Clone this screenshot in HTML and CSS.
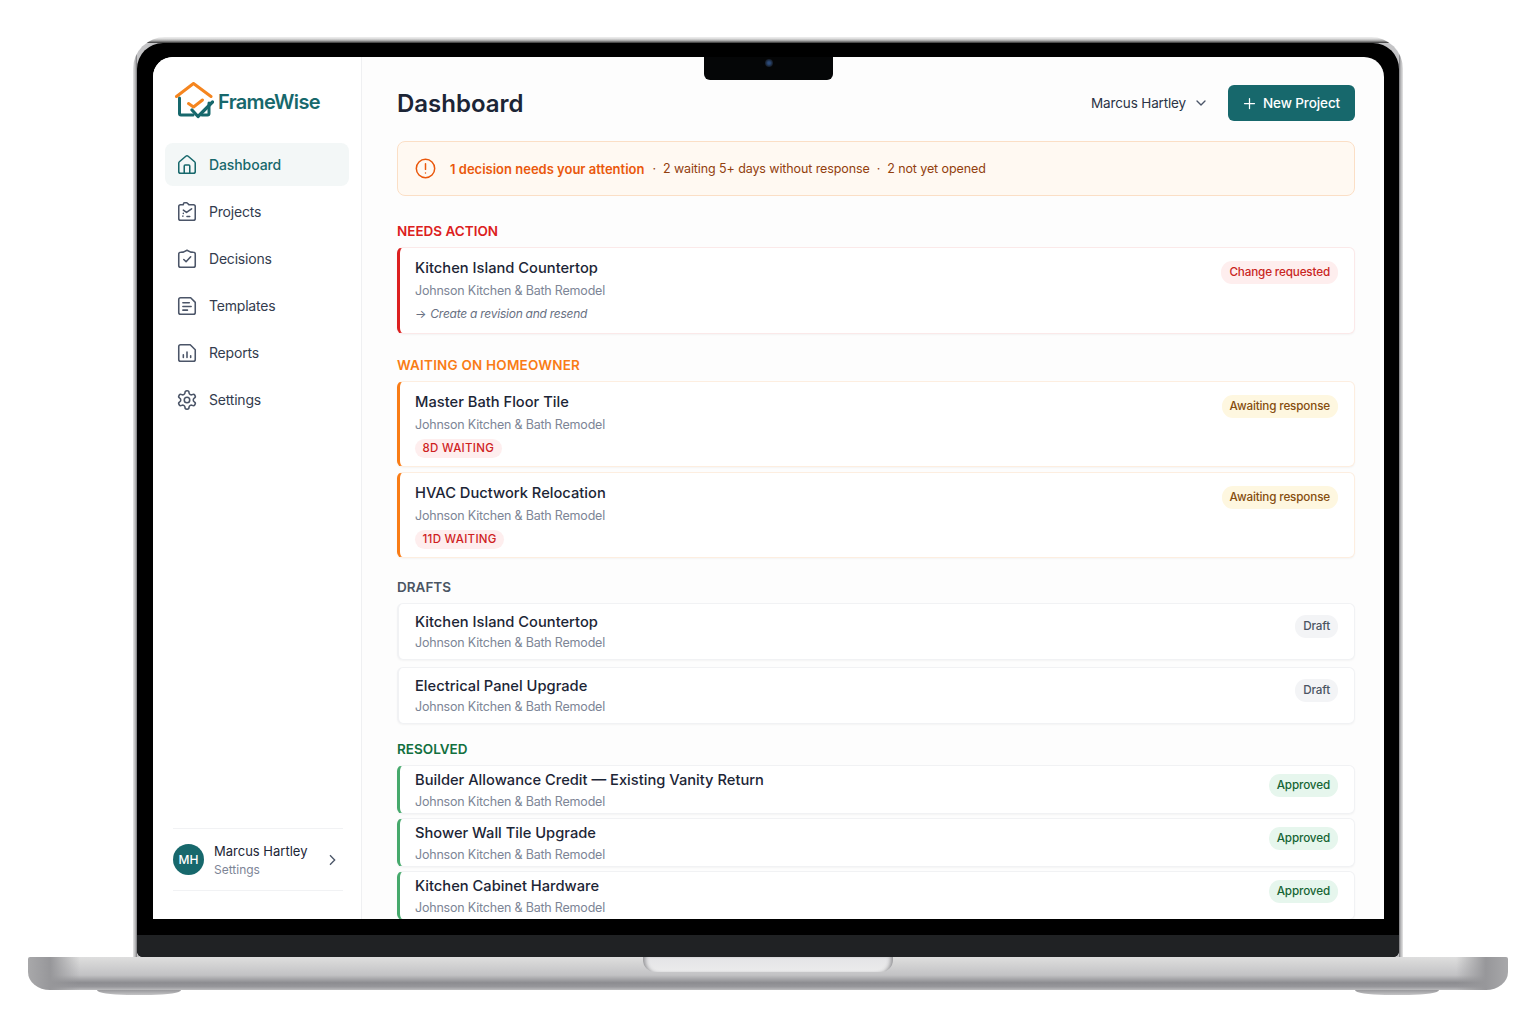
FILE: index.html
```html
<!DOCTYPE html>
<html lang="en">
<head>
    <meta charset="UTF-8">
    <meta name="viewport" content="width=device-width, initial-scale=1.0">
    <title>FrameWise - Dashboard</title>
    <link rel="stylesheet" href="styles.css">
</head>
<body>
    <div class="laptop">
        <div class="lid">
            <div class="bezel">
                <div class="notch"><span class="camera"></span></div>
                <div class="screen">
                    <aside class="sidebar">
                        <a href="#" class="logo">
                            <svg class="logo-mark" viewBox="0 0 40 38" fill="none" stroke-linecap="round" stroke-linejoin="round">
                                <path d="M2.5 14.5 19.5 1.5l17.5 13" stroke="#f5851f" stroke-width="3"/>
                                <path d="M5.5 16v15.5a1.500 1.500 0 0 0 1.500 1.500h12M35 21v10.500a1.500 1.500 0 0 1-1.500 1.500H28" stroke="#17686c" stroke-width="3"/>
                                <path d="m14.500 21.500 5 3.500 9-7" stroke="#f5851f" stroke-width="3"/>
                                <path d="m18 28 6 6.500L38.500 20" stroke="#17686c" stroke-width="3.200"/>
                            </svg>
                            <span>FrameWise</span>
                        </a>
                        <ul class="nav-links">
                            <li><a href="#" class="active">
                                <svg class="nav-icon" viewBox="0 0 24 24"><path d="M15 21v-8a1 1 0 0 0-1-1h-4a1 1 0 0 0-1 1v8"/><path d="M3 10a2 2 0 0 1 .709-1.528l7-5.999a2 2 0 0 1 2.582 0l7 5.999A2 2 0 0 1 21 10v9a2 2 0 0 1-2 2H5a2 2 0 0 1-2-2z"/></svg>
                                Dashboard</a></li>
                            <li><a href="#">
                                <svg class="nav-icon" viewBox="0 0 24 24"><path d="M8 4H5a2 2 0 0 0-2 2v13a2 2 0 0 0 2 2h14a2 2 0 0 0 2-2V6a2 2 0 0 0-2-2h-5l-1.500-1.500a1.500 1.500 0 0 0-1-.5H9.500A1.500 1.500 0 0 0 8 3.500z"/><path d="m8 10 3.500 2.500L17 8.500"/><path d="M7.500 16.500h.01M8 13.500h.01M12 17h3"/></svg>
                                Projects</a></li>
                            <li><a href="#">
                                <svg class="nav-icon" viewBox="0 0 24 24"><path d="M8 4.500 5 4.600a2 2 0 0 0-2 2V19a2 2 0 0 0 2 2h14a2 2 0 0 0 2-2V6.600a2 2 0 0 0-2-2L16 4.500 12 2.500z"/><path d="m8.500 12.500 2.500 2.500 5-5.500"/></svg>
                                Decisions</a></li>
                            <li><a href="#">
                                <svg class="nav-icon" viewBox="0 0 24 24"><path d="M5 3h11l5 5v11a2 2 0 0 1-2 2H5a2 2 0 0 1-2-2V5a2 2 0 0 1 2-2z"/><path d="M7.500 8.500h7M7.500 12.500h9M7.500 16.500h5"/></svg>
                                Templates</a></li>
                            <li><a href="#">
                                <svg class="nav-icon" viewBox="0 0 24 24"><path d="M5 3h10.500L21 8.500V19a2 2 0 0 1-2 2H5a2 2 0 0 1-2-2V5a2 2 0 0 1 2-2z"/><path d="M8 17v-3M12 17v-6M16 17v-2"/></svg>
                                Reports</a></li>
                            <li><a href="#">
                                <svg class="nav-icon" viewBox="0 0 24 24"><path d="M12.220 2h-.44a2 2 0 0 0-2 2v.18a2 2 0 0 1-1 1.730l-.43.25a2 2 0 0 1-2 0l-.15-.08a2 2 0 0 0-2.730.73l-.22.38a2 2 0 0 0 .73 2.730l.15.1a2 2 0 0 1 1 1.720v.51a2 2 0 0 1-1 1.740l-.15.09a2 2 0 0 0-.73 2.730l.22.38a2 2 0 0 0 2.730.73l.15-.08a2 2 0 0 1 2 0l.43.25a2 2 0 0 1 1 1.730V20a2 2 0 0 0 2 2h.44a2 2 0 0 0 2-2v-.18a2 2 0 0 1 1-1.730l.43-.25a2 2 0 0 1 2 0l.15.08a2 2 0 0 0 2.730-.73l.22-.39a2 2 0 0 0-.73-2.730l-.15-.08a2 2 0 0 1-1-1.740v-.5a2 2 0 0 1 1-1.740l.15-.09a2 2 0 0 0 .73-2.730l-.22-.38a2 2 0 0 0-2.730-.73l-.15.08a2 2 0 0 1-2 0l-.43-.25a2 2 0 0 1-1-1.730V4a2 2 0 0 0-2-2z"/><circle cx="12" cy="12" r="3"/></svg>
                                Settings</a></li>
                        </ul>
                        <div class="user-card">
                            <div class="avatar">MH</div>
                            <div class="user-text">
                                <div class="user-name">Marcus Hartley</div>
                                <div class="user-sub">Settings</div>
                            </div>
                            <svg class="user-arrow" viewBox="0 0 24 24"><path d="m9 5 7 7-7 7"/></svg>
                        </div>
                    </aside>

                    <main class="content">
                        <header class="topbar">
                            <h1>Dashboard</h1>
                            <div class="user-menu">
                                <span>Marcus Hartley</span>
                                <svg viewBox="0 0 24 24"><path d="m6 9 6 6 6-6"/></svg>
                            </div>
                            <button class="new-btn">
                                <svg viewBox="0 0 24 24"><path d="M12 4v16M4 12h16"/></svg>
                                New Project
                            </button>
                        </header>

                        <div class="alert">
                            <svg class="alert-icon" viewBox="0 0 24 24"><circle cx="12" cy="12" r="10.500"/><path d="M12 6.500v6.500M12 17v.01"/></svg>
                            <strong>1 decision needs your attention</strong>
                            <span class="dot">·</span>
                            <span>2 waiting 5+ days without response</span>
                            <span class="dot">·</span>
                            <span>2 not yet opened</span>
                        </div>

                        <h2 class="section-title red">NEEDS ACTION</h2>
                        <div class="card-list">
                            <div class="card card-red">
                                <div class="card-body">
                                    <h3>Kitchen Island Countertop</h3>
                                    <p class="sub">Johnson Kitchen &amp; Bath Remodel</p>
                                    <p class="note">→ <em>Create a revision and resend</em></p>
                                </div>
                                <span class="badge badge-red">Change requested</span>
                            </div>
                        </div>

                        <h2 class="section-title orange">WAITING ON HOMEOWNER</h2>
                        <div class="card-list">
                            <div class="card card-orange">
                                <div class="card-body">
                                    <h3>Master Bath Floor Tile</h3>
                                    <p class="sub">Johnson Kitchen &amp; Bath Remodel</p>
                                    <span class="tag">8D WAITING</span>
                                </div>
                                <span class="badge badge-yellow">Awaiting response</span>
                            </div>
                            <div class="card card-orange">
                                <div class="card-body">
                                    <h3>HVAC Ductwork Relocation</h3>
                                    <p class="sub">Johnson Kitchen &amp; Bath Remodel</p>
                                    <span class="tag">11D WAITING</span>
                                </div>
                                <span class="badge badge-yellow">Awaiting response</span>
                            </div>
                        </div>

                        <h2 class="section-title gray">DRAFTS</h2>
                        <div class="card-list">
                            <div class="card card-plain">
                                <div class="card-body">
                                    <h3>Kitchen Island Countertop</h3>
                                    <p class="sub">Johnson Kitchen &amp; Bath Remodel</p>
                                </div>
                                <span class="badge badge-gray">Draft</span>
                            </div>
                            <div class="card card-plain">
                                <div class="card-body">
                                    <h3>Electrical Panel Upgrade</h3>
                                    <p class="sub">Johnson Kitchen &amp; Bath Remodel</p>
                                </div>
                                <span class="badge badge-gray">Draft</span>
                            </div>
                        </div>

                        <h2 class="section-title green">RESOLVED</h2>
                        <div class="card-list tight">
                            <div class="card card-green">
                                <div class="card-body">
                                    <h3>Builder Allowance Credit — Existing Vanity Return</h3>
                                    <p class="sub">Johnson Kitchen &amp; Bath Remodel</p>
                                </div>
                                <span class="badge badge-green">Approved</span>
                            </div>
                            <div class="card card-green">
                                <div class="card-body">
                                    <h3>Shower Wall Tile Upgrade</h3>
                                    <p class="sub">Johnson Kitchen &amp; Bath Remodel</p>
                                </div>
                                <span class="badge badge-green">Approved</span>
                            </div>
                            <div class="card card-green">
                                <div class="card-body">
                                    <h3>Kitchen Cabinet Hardware</h3>
                                    <p class="sub">Johnson Kitchen &amp; Bath Remodel</p>
                                </div>
                                <span class="badge badge-green">Approved</span>
                            </div>
                        </div>
                    </main>
                </div>
                <div class="chin"></div>
            </div>
        </div>
        <div class="base">
            <span class="base-notch"></span>
            <span class="foot foot-left"></span>
            <span class="foot foot-right"></span>
        </div>
    </div>
</body>
</html>
```

FILE: styles.css
```css
:root {
    --teal: #17686c;
    --ink: #1c2536;
    --muted: #7d8596;
    --red: #dc2020;
    --orange: #f97c16;
    --green: #46a96c;
}

* {
    margin: 0;
    padding: 0;
    box-sizing: border-box;
    font-family: 'Inter', 'Liberation Sans', sans-serif;
}

body {
    background: white;
    height: 1024px;
    overflow: hidden;
}

svg {
    display: block;
    flex: none;
}

/* Laptop shell */
.laptop {
    display: flex;
    flex-direction: column;
    align-items: center;
    padding-top: 37px;
}

.lid {
    width: 1270px;
    height: 920px;
    padding: 6px 4px 0;
    border-radius: 32px 32px 0 0;
    background: linear-gradient(#eeeeee, #dcdcdc 30%, #a8a8a8 60%, #555 90%, #222) top / 100% 6px no-repeat, linear-gradient(90deg, #e6e6e6, #b4b4b6 60%, #77777a) left / 4px 100% no-repeat, linear-gradient(270deg, #e6e6e6, #b4b4b6 60%, #77777a) right / 4px 100% no-repeat, #c4c4c6;
}

.bezel {
    position: relative;
    display: flex;
    flex-direction: column;
    height: 914px;
    padding: 14px 15px 0 16px;
    background: #000;
    border-radius: 26px 26px 6px 6px;
}

.notch {
    position: absolute;
    top: 14px;
    left: 567px;
    display: flex;
    justify-content: center;
    align-items: center;
    width: 129px;
    height: 23px;
    background: #050607;
    border-radius: 0 0 6px 6px;
    z-index: 2;
}

.camera {
    width: 8px;
    height: 8px;
    margin-top: -12px;
    border-radius: 50%;
    background: radial-gradient(circle, #2c4a78 20%, #12161d 75%);
}

.screen {
    display: flex;
    height: 862px;
    overflow: hidden;
    background: #fdfdfd;
    border-radius: 20px 20px 0 0;
}

.chin {
    height: 22px;
    margin: 16px -15px 0 -16px;
    background: #202224;
    border-radius: 0 0 6px 6px;
}

.base {
    position: relative;
    width: 1480px;
    height: 33px;
    border-radius: 2px 2px 22px 22px / 2px 2px 18px 18px;
    background:
        linear-gradient(90deg, #a8a8aa, #97979a 1.500%, rgba(200,200,202,0) 3.500%, rgba(200,200,202,0) 96.500%, #97979a 98.500%, #a8a8aa),
        linear-gradient(#dedede, #cfcfd0 30%, #c2c2c4 55%, #8c8c90 78%, #97979b 90%, #bcbcbe);
}

.base-notch {
    position: absolute;
    top: 0;
    left: 615px;
    width: 250px;
    height: 15px;
    background: linear-gradient(#e4e4e6, #ebebec);
    border-radius: 0 0 12px 12px;
    box-shadow: inset 5px 0 4px -3px #8d8d90, inset -5px 0 4px -3px #8d8d90;
}

.foot {
    position: absolute;
    top: 33px;
    width: 84px;
    height: 5px;
    background: linear-gradient(#98989b, #c4c4c6);
    border-radius: 0 0 30px 30px / 0 0 5px 5px;
}

.foot-left {
    left: 69px;
}

.foot-right {
    right: 69px;
}

/* Sidebar */
.sidebar {
    display: flex;
    flex-direction: column;
    flex: none;
    width: 209px;
    padding: 25px 12px 28px;
    background: white;
    border-right: 1px solid #eff0f2;
}

.logo {
    display: flex;
    align-items: center;
    gap: 4px;
    margin-left: 9px;
    color: var(--teal);
    font-size: 20px;
    font-weight: 600;
    letter-spacing: -0.650px;
    text-decoration: none;
}

.logo span {
    padding-top: 2px;
}

.logo-mark {
    width: 40px;
    height: 38px;
}

.nav-links {
    display: flex;
    flex-direction: column;
    gap: 4px;
    margin-top: 23px;
    list-style: none;
}

.nav-links a {
    display: flex;
    align-items: center;
    gap: 11px;
    height: 43px;
    padding-left: 11px;
    border-radius: 8px;
    color: #333c4e;
    font-size: 14px;
    letter-spacing: -0.200px;
    text-decoration: none;
}

.nav-links a.active {
    background: #f3f7f7;
    color: var(--teal);
    font-weight: 500;
    letter-spacing: -0.100px;
}

.nav-icon {
    width: 22px;
    height: 22px;
    fill: none;
    stroke: #4b5568;
    stroke-width: 1.700;
    stroke-linecap: round;
    stroke-linejoin: round;
}

.active .nav-icon {
    stroke: var(--teal);
}

.user-card {
    display: flex;
    align-items: center;
    margin: auto 6px 0 8px;
    height: 63px;
    border-top: 1px solid #f1f2f4;
    border-bottom: 1px solid #f1f2f4;
}

.avatar {
    display: flex;
    justify-content: center;
    align-items: center;
    width: 31px;
    height: 31px;
    flex: none;
    border-radius: 50%;
    background: var(--teal);
    color: white;
    font-size: 12px;
    font-weight: 500;
}

.user-text {
    flex: 1;
    margin-left: 10px;
}

.user-name {
    color: var(--ink);
    font-size: 13px;
    line-height: 20px;
}

.user-sub {
    color: var(--muted);
    font-size: 12px;
    line-height: 18px;
}

.user-arrow {
    width: 16px;
    height: 16px;
    margin-right: 3px;
    fill: none;
    stroke: #4b5568;
    stroke-width: 2;
}

/* Main content */
.content {
    flex: 1;
    padding: 28px 29px 0 35px;
}

.topbar {
    display: flex;
    align-items: center;
    height: 36px;
}

h1 {
    flex: 1;
    color: var(--ink);
    font-size: 24px;
    font-weight: 600;
}

.user-menu {
    display: flex;
    align-items: center;
    gap: 7px;
    margin-right: 19px;
    color: #2b3446;
    font-size: 13.500px;
    letter-spacing: -0.150px;
}

.user-menu svg {
    width: 16px;
    height: 16px;
    fill: none;
    stroke: #4b5568;
    stroke-width: 2;
    stroke-linecap: round;
    stroke-linejoin: round;
}

.new-btn {
    display: flex;
    align-items: center;
    gap: 6px;
    height: 36px;
    width: 127px;
    padding-left: 14px;
    border: none;
    border-radius: 6px;
    background: var(--teal);
    color: white;
    font-size: 13.500px;
    font-weight: 500;
    letter-spacing: -0.100px;
}

.new-btn svg {
    width: 15px;
    height: 15px;
    fill: none;
    stroke: white;
    stroke-width: 2;
    stroke-linecap: round;
}

.alert {
    display: flex;
    align-items: center;
    gap: 7px;
    height: 55px;
    margin-top: 20px;
    padding-left: 17px;
    border: 1px solid #fbdfc6;
    border-radius: 8px;
    background: #fff9f2;
    color: #92400e;
    font-size: 12.500px;
    letter-spacing: -0.100px;
}

.alert strong {
    margin-right: 1px;
    color: #ea580c;
    font-size: 13px;
    font-weight: 600;
    letter-spacing: 0;
}

.alert-icon {
    width: 21px;
    height: 21px;
    margin-right: 7px;
    fill: none;
    stroke: #ea580c;
    stroke-width: 1.700;
    stroke-linecap: round;
}

.section-title {
    margin-bottom: 8px;
    font-size: 13.500px;
    font-weight: 600;
    line-height: 16px;
}

.section-title.red { margin-top: 27px; color: var(--red); }
.section-title.orange { margin-top: 23px; color: var(--orange); letter-spacing: 0.200px; }
.section-title.gray { margin-top: 21px; color: #4b5563; }
.section-title.green { margin-top: 17px; color: #12703f; }

.card-list {
    display: flex;
    flex-direction: column;
    gap: 7px;
}

.card-list.tight {
    gap: 4px;
}

.card {
    display: flex;
    justify-content: space-between;
    align-items: flex-start;
    padding: 10px 16px 10px 15px;
    border: 1px solid #f1f2f4;
    border-radius: 6px;
    background: white;
    box-shadow: 0 1px 2px rgba(0,0,0,0.04);
}

.card-body {
    display: flex;
    flex-direction: column;
    align-items: flex-start;
}

.card-red {
    border-color: #fbe9e9;
    border-left: 3px solid var(--red);
}

.card-orange {
    border-color: #fdeee0;
    border-left: 3px solid var(--orange);
    padding-bottom: 8px;
}

.card-list:has(.card-orange) {
    gap: 5px;
}

.card-plain {
    padding: 8px 16px 7px 16px;
    border-left-width: 2px;
}

.card-green {
    padding: 4px 16px 2px 15px;
    border-left: 3px solid var(--green);
}

h3 {
    color: var(--ink);
    font-size: 14.700px;
    font-weight: 500;
    line-height: 20px;
}

.sub {
    margin-top: 4px;
    color: var(--muted);
    font-size: 12.500px;
    letter-spacing: -0.200px;
    line-height: 18px;
}

.card-plain .sub {
    margin-top: 2px;
}

.card-green .sub {
    margin-top: 3px;
}

.note {
    margin-top: 5px;
    color: #687082;
    font-size: 12px;
    letter-spacing: -0.250px;
    line-height: 18px;
}

.note em {
    margin-left: 1px;
}

.tag {
    margin-top: 5px;
    padding: 0 7.500px;
    border-radius: 10px;
    background: #feeeee;
    color: #cf1f1f;
    font-size: 11.500px;
    font-weight: 500;
    letter-spacing: 0.300px;
    line-height: 19px;
}

.badge {
    margin-top: 3px;
    padding: 0 8px;
    border-radius: 11px;
    font-size: 11.700px;
    font-weight: 500;
    letter-spacing: -0.150px;
    line-height: 23px;
}

.card-green .badge {
    margin-top: 4px;
}

.badge-red { background: #feeeee; color: #c9261f; }
.badge-yellow { background: #fef7e0; color: #854d0e; }
.badge-gray { background: #f3f4f6; color: #4b5563; }
.badge-green { background: #e6f6ed; color: #166534; }
```
